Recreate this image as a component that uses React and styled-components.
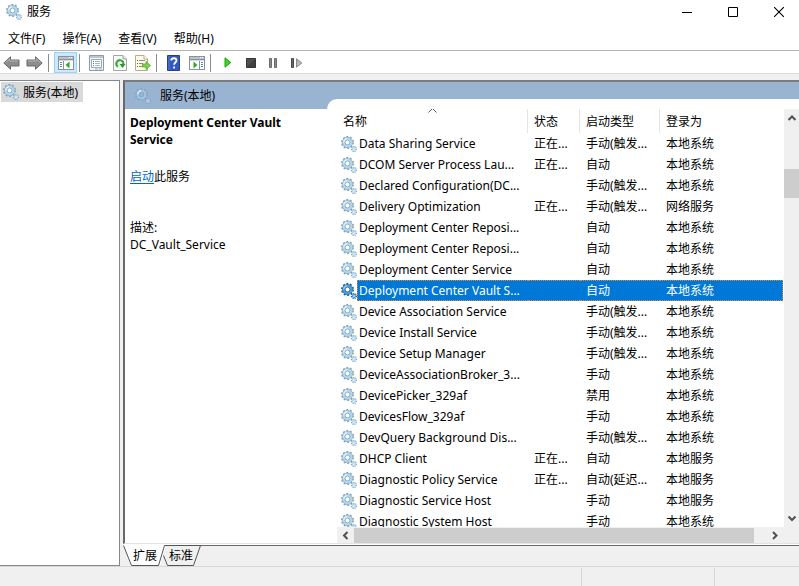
import React from "react";
import styled, { createGlobalStyle } from "styled-components";

const Global = createGlobalStyle`
  * { box-sizing: border-box; }
  html, body { margin: 0; padding: 0; }
  body, button {
    font-family: "Noto Sans", "Noto Sans CJK SC", sans-serif;
    font-size: 12px;
    line-height: 17px;
    color: #000;
  }
  button { border: 0; padding: 0; margin: 0; background: none; }
  svg { display: block; flex: none; }
`;

const Window = styled.div`
  height: 100vh;
  display: flex;
  flex-direction: column;
  background: #f0f0f0;
  overflow: hidden;
`;

const TitleBar = styled.header`
  flex: none;
  display: flex;
  align-items: center;
  height: 23px;
  padding-left: 6px;
  background: #fff;
`;

const Title = styled.h1`
  flex: 1;
  margin: 0 0 0 5px;
  font-size: 12px;
  font-weight: 400;
`;

const WindowButton = styled.button`
  display: grid;
  place-items: center;
  width: 46px;
  height: 22px;
  &:last-child { margin-right: -3px; }
`;

const MenuBar = styled.nav`
  flex: none;
  display: flex;
  gap: 17px;
  height: 28px;
  padding: 5px 8px 0;
  background: #fff;
  border-bottom: 1px solid #b4b4b4;
`;

const MenuItem = styled.button`
  height: 21px;
  white-space: nowrap;
`;

const ToolBar = styled.div`
  flex: none;
  display: flex;
  align-items: center;
  height: 23px;
  padding-top: 1px;
  background: #fff;
  border-bottom: 1px solid #dcdcdc;
`;

const ToolButton = styled.button`
  display: grid;
  place-items: center;
  width: 23px;
  height: 21px;
  border: 1px solid ${(p) => (p.$active ? "#99d1ff" : "transparent")};
  background: ${(p) => (p.$active ? "#cce8ff" : "transparent")};
`;

const Separator = styled.span`
  width: 1px;
  height: 18px;
  margin: 0 5px 0 2px;
  background: #8c8c8c;
`;

const Main = styled.main`
  flex: 1;
  min-height: 0;
  display: flex;
  gap: 3px;
  padding-top: 6px;
`;

const TreePane = styled.aside`
  flex: none;
  width: 120px;
  padding: 1px;
  background: #fff;
  border: 1px solid #828790;
  border-left: 0;
`;

const TreeItem = styled.button`
  display: flex;
  align-items: center;
  gap: 4px;
  height: 20px;
  padding: 0 5px 0 2px;
  background: #d9d9d9;
`;

const RightPane = styled.section`
  flex: 1;
  min-width: 0;
  display: flex;
  flex-direction: column;
`;

const Frame = styled.div`
  flex: 1;
  min-height: 0;
  display: flex;
  flex-direction: column;
  background: #fff;
  border: solid #696969;
  border-width: 2px 0 1px 2px;
  border-top-color: #7c7c7c;
  border-bottom-color: #e3e3e3;
`;

const Band = styled.div`
  flex: none;
  display: flex;
  align-items: center;
  gap: 9px;
  height: 27px;
  padding-left: 10px;
  background: #99b4d1;
`;

const Content = styled.div`
  flex: 1;
  min-height: 0;
  display: flex;
`;

const Details = styled.div`
  flex: none;
  width: 202px;
  padding: 5px 30px 0 5px;
`;

const ServiceName = styled.h2`
  margin: 0 0 20px;
  font-size: 12px;
  line-height: 17px;
  font-weight: 700;
`;

const Action = styled.p`
  margin: 0 0 34px;
  a { color: #0066cc; text-underline-offset: 2px; }
`;

const Description = styled.p`
  margin: 0;
`;

const ListCard = styled.div`
  flex: 1;
  min-width: 0;
  margin-top: -10px;
  padding: 10px 0 0 10px;
  background: #fff;
  border-top-left-radius: 10px;
  display: grid;
  grid-template: minmax(0, 1fr) 16px / minmax(0, 1fr) 15px;
`;

const TableClip = styled.div`
  overflow: hidden;
  padding-right: 1px;
`;

const Table = styled.table`
  width: 100%;
  table-layout: fixed;
  border-collapse: separate;
  border-spacing: 0;
  white-space: nowrap;
`;

const HeadCell = styled.th`
  height: 24px;
  width: ${(p) => p.$width || "auto"};
  padding: 0 0 0 6px;
  border-right: ${(p) => (p.$last ? "0" : "1px solid #e5e5e5")};
  font-weight: 400;
  text-align: left;
`;

const HeadLabel = styled.div`
  position: relative;
`;

const SortMark = styled.svg`
  position: absolute;
  left: 50%;
  top: -5px;
  margin-left: -7px;
`;

const Cell = styled.td`
  height: 21px;
  padding: 0 0 0 6px;
  overflow: hidden;
`;

const NameCell = styled(Cell)`
  padding: 0 0 0 4px;
`;

const Row = styled.tr`
  color: ${(p) => (p.$selected ? "#fff" : "#000")};
  ${Cell}:not(${NameCell}) {
    ${(p) => p.$selected && "background: #0078d7; border: dotted #e08a3c; border-width: 1px 0;"}
  }
  ${Cell}:last-child { ${(p) => p.$selected && "border-right-width: 1px;"} }
`;

const NameBox = styled.div`
  display: flex;
  align-items: center;
  height: 21px;
`;

const NameText = styled.span`
  flex: 1;
  height: 21px;
  line-height: 19px;
  padding-left: 1px;
  border: 1px dotted ${(p) => (p.$selected ? "#e08a3c" : "transparent")};
  border-right: 0;
  background: ${(p) => (p.$selected ? "#0078d7" : "transparent")};
`;

const VScroll = styled.div`
  display: flex;
  flex-direction: column;
  align-items: center;
  justify-content: space-between;
  padding: 5px 0 4px;
  background: #f0f0f0;
  position: relative;
`;

const VThumb = styled.span`
  position: absolute;
  top: 60px;
  left: 0;
  right: 0;
  height: 29px;
  background: #cdcdcd;
`;

const HScroll = styled.div`
  grid-column: 1 / -1;
  display: flex;
  align-items: center;
  background: #f0f0f0;
`;

const ScrollArrow = styled.button`
  display: grid;
  place-items: center;
  width: 17px;
`;

const HTrack = styled.div`
  flex: 1;
  height: 15px;
`;

const HThumb = styled.div`
  width: 97%;
  height: 15px;
  background: #cdcdcd;
`;

const Corner = styled.span`
  width: 16px;
`;

const TabStrip = styled.div`
  flex: none;
  display: flex;
  height: 22px;
  position: relative;
  border-top: 1px solid #fff;
  background: linear-gradient(#696969, #696969) 42px 0 / 100% 1px no-repeat #f0f0f0;
`;

const TabShapes = styled.svg`
  position: absolute;
  left: 0;
  top: 0;
`;

const Tab = styled.button`
  position: relative;
  width: ${(p) => p.$width};
  height: 21px;
  text-align: right;
`;

const StatusBar = styled.footer`
  flex: none;
  display: grid;
  grid-template-columns: 1fr 133px 84px;
  height: 20px;
  border-top: 1px solid #d7d7d7;
`;

const StatusCell = styled.span`
  margin-top: 1px;
  border-right: ${(p) => (p.$last ? "0" : "1px solid #d7d7d7")};
`;

function Gear({ selected, muted }) {
  const body = selected ? "#4d9ddb" : muted ? "#a5c6e0" : "#b4d6ec";
  const edge = selected ? "#1f5f97" : muted ? "#7da5c8" : "#7fa3bf";
  return (
    <svg width="16" height="16" viewBox="0 0 16 16" aria-hidden="true">
      <circle cx="6.5" cy="6.5" r="5.7" fill="none" stroke={edge} strokeWidth="1.6" strokeDasharray="1.9 1.68" />
      <circle cx="6.5" cy="6.5" r="3.9" fill="none" stroke={edge} strokeWidth="3" />
      <circle cx="6.5" cy="6.5" r="3.8" fill="none" stroke={body} strokeWidth="2.4" />
      <path d="M2.800 6.400a3.700 3.700 0 0 1 3.500-3.600" fill="none" stroke={selected ? "#9dcdf0" : "#e6f3fb"} strokeWidth="1.3" />
      <circle cx="6.5" cy="6.5" r="2.400" fill={muted ? "#99b4d1" : "#fff"} stroke={edge} strokeWidth="0.8" />
      <circle cx="13" cy="13" r="2.400" fill="none" stroke={edge} strokeWidth="1.4" strokeDasharray="1 0.9" />
      <circle cx="13" cy="13" r="1.500" fill={muted ? "#b9d0e2" : "#eef6fb"} stroke={body} strokeWidth="1.3" />
    </svg>
  );
}

function Arrow({ flip }) {
  return (
    <svg width="17" height="14" viewBox="0 0 17 14">
      <g transform={flip ? "translate(17 0) scale(-1 1)" : undefined}>
        <path d="M.8 7 7.500.8V4H16v6H7.500v3.200z" fill="#8d8d8d" stroke="#6a6a6a" />
        <path d="M2.500 6.700 6.700 2.800V5H15" fill="none" stroke="#b5b5b5" />
      </g>
    </svg>
  );
}

function PanelIcon({ right }) {
  return (
    <svg width="16" height="14" viewBox="0 0 16 14" shapeRendering="crispEdges">
      <path d="M0 0h16v14H0z" fill="#8a929b" />
      <path d="M1 1h14v2H1z" fill="#b9c3cc" />
      <path d="M11 1h1v1h-1zM13 1h1v1h-1z" fill="#fff" />
      <path d="M1 4h14v9H1z" fill="#fff" />
      <path d="M1 4h14v1H1z" fill="#d5dbe0" />
      <path d={right ? "M10 5h1v8h-1z" : "M5 5h1v8H5z"} fill="#8a929b" />
      <path d={right ? "M12 6.500h2M12 8.500h2M12 10.500h2" : "M2 6.500h2M2 8.500h2M2 10.500h2"} stroke="#4c86c6" />
      <path d={right ? "M4.500 5.500v7L8.500 9z" : "M11.500 5.500v7L7.500 9z"} fill="#35a52c" shapeRendering="auto" />
    </svg>
  );
}

function PropertiesIcon() {
  return (
    <svg width="15" height="16" viewBox="0 0 15 16">
      <path d="M.5.5h14v15H.5z" fill="#f3f6f8" stroke="#8f9aa3" />
      <path d="M1 2h13" stroke="#bac6d0" strokeWidth="2" />
      <path d="M2.500 4.500h10v8h-10z" fill="#fff" stroke="#9aabbb" />
      <path d="M4 6.500h1M4 8.500h1M4 10.500h1" stroke="#337ac0" />
      <path d="M6 6.500h5M6 8.500h5M6 10.500h5" stroke="#a9b6c2" />
      <path d="M6 14h3M10 14h3" stroke="#9cabb8" />
    </svg>
  );
}

function RefreshIcon() {
  return (
    <svg width="14" height="16" viewBox="0 0 14 16">
      <path d="M.5.5h9.500L13.500 4v11.500H.5z" fill="#f8faf6" stroke="#a5a5a5" />
      <path d="M10 .5V4h3.500" fill="#e5e5e5" stroke="#a5a5a5" />
      <path d="M5 11.700A3.500 3.500 0 1 1 10.200 9.500" fill="none" stroke="#3aa53a" strokeWidth="2" />
      <path d="M6.500 9h6L9.500 13z" fill="#2e982e" />
    </svg>
  );
}

function ExportIcon() {
  return (
    <svg width="16" height="16" viewBox="0 0 16 16">
      <path d="M.5.5H9L12.500 4v11.500H.5z" fill="#fffbe4" stroke="#b8ad87" />
      <path d="M9 .5V4h3.500" fill="#fff" stroke="#b8ad87" />
      <path d="M2 5.500h1M2 8.500h1M2 11.500h1" stroke="#52577a" />
      <path d="M4 5.500h6M4 8.500h4M4 11.500h4" stroke="#8b8ba2" />
      <path d="M7.500 9H11V6.500l4.500 4L11 14.500V12H7.500z" fill="#7ed14e" stroke="#53ac2c" strokeWidth=".8" />
    </svg>
  );
}

function HelpIcon() {
  return (
    <svg width="13" height="16" viewBox="0 0 13 16">
      <path d="M.5.5h12v15H.5z" fill="#3559b8" stroke="#233f92" />
      <path d="M2 1v14" stroke="#5478ca" />
      <path d="M4.300 5.500c0-3 5.200-3 5.200 0 0 2-2.400 2-2.400 4.200M7.100 11.500v2" fill="none" stroke="#fff" strokeWidth="1.800" />
    </svg>
  );
}

function PlayIcon() {
  return (
    <svg width="8" height="11" viewBox="0 0 8 11">
      <path d="M1 .8v9.400L6.800 5.500z" fill="#44d126" stroke="#1f9e1b" />
    </svg>
  );
}

function StopIcon() {
  return (
    <svg width="10" height="10" viewBox="0 0 10 10">
      <path d="M.5.5h9v9h-9z" fill="#4f4f4f" stroke="#353535" />
      <path d="M1 9 9 1v8z" fill="#404040" />
    </svg>
  );
}

function PauseIcon() {
  return (
    <svg width="9" height="10" viewBox="0 0 9 10">
      <path d="M.5.5h2v9h-2zM5.500.5h2v9h-2z" fill="#8c8c8c" stroke="#6b6b6b" />
    </svg>
  );
}

function StepIcon() {
  return (
    <svg width="12" height="10" viewBox="0 0 12 10">
      <path d="M.5.5h2v9h-2z" fill="#666" stroke="#484848" />
      <path d="M5.500.8v8.400L10.800 5z" fill="#b8b8b8" stroke="#888" />
    </svg>
  );
}

const chevrons = {
  up: "M1.500 6 5 2.500 8.500 6",
  down: "M1.500 2.500 5 6l3.500-3.500",
  left: "M6.500 1 3 4.500 6.500 8",
  right: "M3 1l3.500 3.500L3 8",
};

function Chevron({ dir }) {
  return (
    <svg width="10" height="9" viewBox="0 0 10 9">
      <path d={chevrons[dir]} fill="none" stroke="#505050" strokeWidth="2" />
    </svg>
  );
}

const SYS = "本地系统";
const TRIGGER = "手动(触发...";
const services = [
  ["Data Sharing Service", "正在...", TRIGGER, SYS],
  ["DCOM Server Process Lau...", "正在...", "自动", SYS],
  ["Declared Configuration(DC...", "", TRIGGER, SYS],
  ["Delivery Optimization", "正在...", TRIGGER, "网络服务"],
  ["Deployment Center Reposi...", "", "自动", SYS],
  ["Deployment Center Reposi...", "", "自动", SYS],
  ["Deployment Center Service", "", "自动", SYS],
  ["Deployment Center Vault S...", "", "自动", SYS],
  ["Device Association Service", "", TRIGGER, SYS],
  ["Device Install Service", "", TRIGGER, SYS],
  ["Device Setup Manager", "", TRIGGER, SYS],
  ["DeviceAssociationBroker_3...", "", "手动", SYS],
  ["DevicePicker_329af", "", "禁用", SYS],
  ["DevicesFlow_329af", "", "手动", SYS],
  ["DevQuery Background Dis...", "", TRIGGER, SYS],
  ["DHCP Client", "正在...", "自动", "本地服务"],
  ["Diagnostic Policy Service", "正在...", "自动(延迟...", "本地服务"],
  ["Diagnostic Service Host", "", "手动", "本地服务"],
  ["Diagnostic System Host", "", "手动", SYS],
];
const SELECTED = 7;

export default function App() {
  return (
    <Window lang="zh-CN">
      <Global />
      <TitleBar>
        <Gear />
        <Title>服务</Title>
        <WindowButton aria-label="最小化">
          <svg width="10" height="10"><path d="M0 5.500h10" stroke="#000" /></svg>
        </WindowButton>
        <WindowButton aria-label="最大化">
          <svg width="10" height="10"><path d="M.5.5h9v9h-9z" fill="none" stroke="#000" /></svg>
        </WindowButton>
        <WindowButton aria-label="关闭">
          <svg width="10" height="10"><path d="M0 0l10 10M10 0 0 10" stroke="#000" strokeWidth="1.100" /></svg>
        </WindowButton>
      </TitleBar>
      <MenuBar>
        {["文件(F)", "操作(A)", "查看(V)", "帮助(H)"].map((m) => (
          <MenuItem key={m}>{m}</MenuItem>
        ))}
      </MenuBar>
      <ToolBar role="toolbar">
        <ToolButton aria-label="后退"><Arrow /></ToolButton>
        <ToolButton aria-label="前进"><Arrow flip /></ToolButton>
        <Separator />
        <ToolButton $active aria-label="显示控制台树"><PanelIcon /></ToolButton>
        <Separator />
        <ToolButton aria-label="属性"><PropertiesIcon /></ToolButton>
        <ToolButton aria-label="刷新"><RefreshIcon /></ToolButton>
        <ToolButton aria-label="导出列表"><ExportIcon /></ToolButton>
        <Separator />
        <ToolButton aria-label="帮助"><HelpIcon /></ToolButton>
        <ToolButton aria-label="显示操作窗格"><PanelIcon right /></ToolButton>
        <Separator />
        <ToolButton aria-label="启动服务"><PlayIcon /></ToolButton>
        <ToolButton aria-label="停止服务"><StopIcon /></ToolButton>
        <ToolButton aria-label="暂停服务"><PauseIcon /></ToolButton>
        <ToolButton aria-label="重启动服务"><StepIcon /></ToolButton>
      </ToolBar>
      <Main>
        <TreePane>
          <TreeItem><Gear />服务(本地)</TreeItem>
        </TreePane>
        <RightPane>
          <Frame>
            <Band><Gear muted />服务(本地)</Band>
            <Content>
              <Details>
                <ServiceName>Deployment Center Vault Service</ServiceName>
                <Action><a href="#start">启动</a>此服务</Action>
                <Description>描述:</Description>
                <Description>DC_Vault_Service</Description>
              </Details>
              <ListCard>
                <TableClip>
                  <Table>
                    <thead>
                      <tr>
                        <HeadCell $width="191px">
                          <HeadLabel>
                            名称
                            <SortMark width="9" height="5" viewBox="0 0 9 5">
                              <path d="M.5 4.500l4-4 4 4" fill="none" stroke="#5c5c5c" />
                            </SortMark>
                          </HeadLabel>
                        </HeadCell>
                        <HeadCell $width="52px">状态</HeadCell>
                        <HeadCell $width="80px">启动类型</HeadCell>
                        <HeadCell $last>登录为</HeadCell>
                      </tr>
                    </thead>
                    <tbody>
                      {services.map(([name, state, start, logon], i) => (
                        <Row key={i} $selected={i === SELECTED}>
                          <NameCell>
                            <NameBox>
                              <Gear selected={i === SELECTED} />
                              <NameText $selected={i === SELECTED}>{name}</NameText>
                            </NameBox>
                          </NameCell>
                          <Cell>{state}</Cell>
                          <Cell>{start}</Cell>
                          <Cell>{logon}</Cell>
                        </Row>
                      ))}
                    </tbody>
                  </Table>
                </TableClip>
                <VScroll>
                  <ScrollArrow aria-label="向上滚动"><Chevron dir="up" /></ScrollArrow>
                  <VThumb />
                  <ScrollArrow aria-label="向下滚动"><Chevron dir="down" /></ScrollArrow>
                </VScroll>
                <HScroll>
                  <ScrollArrow aria-label="向左滚动"><Chevron dir="left" /></ScrollArrow>
                  <HTrack><HThumb /></HTrack>
                  <ScrollArrow aria-label="向右滚动"><Chevron dir="right" /></ScrollArrow>
                  <Corner />
                </HScroll>
              </ListCard>
            </Content>
          </Frame>
          <TabStrip role="tablist">
            <TabShapes width="82" height="21" viewBox="0 0 82 21">
              <path d="M0 0h43l-6 20H8z" fill="#fff" />
              <path d="M.5.500 8.500 20.500h27l6-20h36l-7 20h-26l-4-10" fill="none" stroke="#555" />
            </TabShapes>
            <Tab role="tab" aria-selected="true" $width="34px">扩展</Tab>
            <Tab role="tab" aria-selected="false" $width="36px">标准</Tab>
          </TabStrip>
        </RightPane>
      </Main>
      <StatusBar>
        <StatusCell />
        <StatusCell />
        <StatusCell $last />
      </StatusBar>
    </Window>
  );
}
